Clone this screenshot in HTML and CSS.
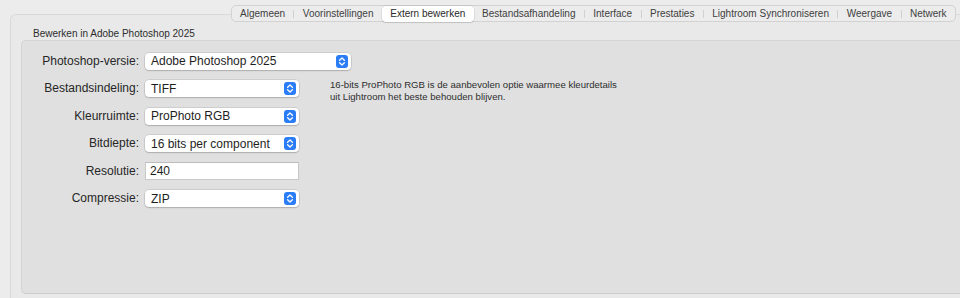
FILE: index.html
```html
<!DOCTYPE html>
<html lang="nl">
<head>
<meta charset="utf-8">
<title>Extern bewerken</title>
<link rel="stylesheet" href="styles.css">
</head>
<body>
<div class="tabview">
  <div class="tabbar">
    <div class="tab">Algemeen</div>
    <div class="sep"></div>
    <div class="tab">Voorinstellingen</div>
    <div class="tab selected">Extern bewerken</div>
    <div class="tab">Bestandsafhandeling</div>
    <div class="sep"></div>
    <div class="tab">Interface</div>
    <div class="sep"></div>
    <div class="tab">Prestaties</div>
    <div class="sep"></div>
    <div class="tab">Lightroom Synchroniseren</div>
    <div class="sep"></div>
    <div class="tab">Weergave</div>
    <div class="sep"></div>
    <div class="tab">Netwerk</div>
  </div>
  <div class="section-title">Bewerken in Adobe Photoshop 2025</div>
  <div class="group">
    <div class="form">
      <div class="label">Photoshop-versie:</div>
      <div class="popup wide"><span>Adobe Photoshop 2025</span><svg class="stepper" viewBox="0 0 12 13"><rect width="12" height="13" rx="3" fill="#2a7df6"/><path d="M3.6 5.2 6 3 8.4 5.2M3.6 7.8 6 10 8.4 7.8" fill="none" stroke="#fff" stroke-width="1.3" stroke-linecap="round" stroke-linejoin="round"/></svg></div>

      <div class="label">Bestandsindeling:</div>
      <div class="popup"><span>TIFF</span><svg class="stepper" viewBox="0 0 12 13"><rect width="12" height="13" rx="3" fill="#2a7df6"/><path d="M3.6 5.2 6 3 8.4 5.2M3.6 7.8 6 10 8.4 7.8" fill="none" stroke="#fff" stroke-width="1.3" stroke-linecap="round" stroke-linejoin="round"/></svg></div>
      <div class="help">16-bits ProPhoto RGB is de aanbevolen optie waarmee kleurdetails<br>uit Lightroom het beste behouden blijven.</div>

      <div class="label">Kleurruimte:</div>
      <div class="popup"><span>ProPhoto RGB</span><svg class="stepper" viewBox="0 0 12 13"><rect width="12" height="13" rx="3" fill="#2a7df6"/><path d="M3.6 5.2 6 3 8.4 5.2M3.6 7.8 6 10 8.4 7.8" fill="none" stroke="#fff" stroke-width="1.3" stroke-linecap="round" stroke-linejoin="round"/></svg></div>

      <div class="label">Bitdiepte:</div>
      <div class="popup"><span>16 bits per component</span><svg class="stepper" viewBox="0 0 12 13"><rect width="12" height="13" rx="3" fill="#2a7df6"/><path d="M3.6 5.2 6 3 8.4 5.2M3.6 7.8 6 10 8.4 7.8" fill="none" stroke="#fff" stroke-width="1.3" stroke-linecap="round" stroke-linejoin="round"/></svg></div>

      <div class="label">Resolutie:</div>
      <div class="field">240</div>

      <div class="label">Compressie:</div>
      <div class="popup"><span>ZIP</span><svg class="stepper" viewBox="0 0 12 13"><rect width="12" height="13" rx="3" fill="#2a7df6"/><path d="M3.6 5.2 6 3 8.4 5.2M3.6 7.8 6 10 8.4 7.8" fill="none" stroke="#fff" stroke-width="1.3" stroke-linecap="round" stroke-linejoin="round"/></svg></div>
    </div>
  </div>
</div>
</body>
</html>
```

FILE: styles.css
```css
html, body {
  margin: 0;
  padding: 0;
  background: #ececec;
  overflow: hidden;
  width: 960px;
  height: 298px;
  font-family: "Liberation Sans", Arial, sans-serif;
  color: #262626;
}

.tabview {
  margin: 14px 0 0 10px;
  width: 950px;
  height: 284px;
  border-top: 1px solid #d9d9d9;
  border-left: 1px solid #d9d9d9;
  border-top-left-radius: 6px;
  background: #e9e9e9;
  box-sizing: border-box;
  display: flex;
  flex-direction: column;
}

.tabbar {
  display: flex;
  align-items: center;
  align-self: flex-end;
  margin: -10px 4px 0 0;
  height: 17px;
  box-sizing: border-box;
  border: 1px solid #d2d2d2;
  border-radius: 5px;
  background: #ececec;
}

.tab {
  padding: 0 8.4px;
  font-size: 10px;
  line-height: 15px;
  color: #404040;
  white-space: nowrap;
}

.tab.selected {
  background: #ffffff;
  border-radius: 4px;
  box-shadow: 0 0 0 0.5px rgba(0, 0, 0, 0.12), 0 1px 1px rgba(0, 0, 0, 0.12);
  color: #2a2a2a;
  line-height: 16px;
}

.sep {
  width: 1px;
  height: 8px;
  background: #d0d0d0;
}

.section-title {
  margin: 6px 0 0 22px;
  font-size: 10px;
  line-height: 12px;
  height: 12px;
  color: #2c2c2c;
}

.group {
  margin: 0 0 0 10px;
  height: 254px;
  flex: none;
  background: #e0e0e0;
  border: 1px solid #d4d4d4;
  border-right: none;
  border-bottom-color: #cbcbcb;
  border-radius: 5px 0 0 5px;
  box-sizing: border-box;
  padding-top: 11.5px;
}

.form {
  display: grid;
  grid-template-columns: 117px 154px 1fr;
  grid-auto-rows: 17px;
  column-gap: 6px;
  row-gap: 10.6px;
  align-items: center;
}

.label {
  grid-column: 1;
  text-align: right;
  font-size: 12px;
  line-height: 17px;
  color: #262626;
  white-space: nowrap;
}

.popup {
  grid-column: 2;
  display: flex;
  align-items: center;
  justify-content: space-between;
  height: 17px;
  box-sizing: border-box;
  padding: 0 3px 0 6px;
  background: #ffffff;
  border-radius: 4px;
  box-shadow: 0 0 0 0.5px rgba(0, 0, 0, 0.16), 0 1px 1.5px rgba(0, 0, 0, 0.16);
  font-size: 12px;
  color: #1e1e1e;
  white-space: nowrap;
}

.popup.wide {
  grid-column: 2 / 4;
  width: 206px;
}

.stepper {
  width: 12px;
  height: 13px;
  display: block;
}

.field {
  grid-column: 2;
  height: 18px;
  box-sizing: border-box;
  padding: 0 4px;
  background: #ffffff;
  border: 1px solid #c8c8c8;
  border-top-color: #bdbdbd;
  font-size: 12px;
  line-height: 16px;
  color: #1e1e1e;
}

.help {
  grid-column: 3;
  grid-row: 2 / span 2;
  align-self: start;
  margin: -1px 0 0 25px;
  font-size: 9.6px;
  line-height: 12px;
  color: #2e2e2e;
  white-space: nowrap;
}
```
